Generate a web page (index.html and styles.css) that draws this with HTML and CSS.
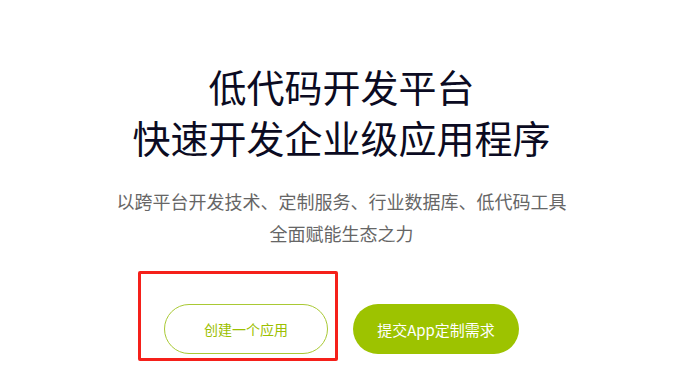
FILE: index.html
```html
<!DOCTYPE html>
<html lang="zh-CN">
<head>
<meta charset="utf-8">
<title>低代码开发平台</title>
<link rel="stylesheet" href="styles.css">
</head>
<body>
<section class="hero">
  <h1 class="hero-title">低代码开发平台<br>快速开发企业级应用程序</h1>
  <p class="hero-sub">以跨平台开发技术、定制服务、行业数据库、低代码工具<br>全面赋能生态之力</p>
  <div class="hero-actions">
    <div class="mark">
      <a class="btn btn-outline" href="#">创建一个应用</a>
    </div>
    <a class="btn btn-solid" href="#">提交App定制需求</a>
  </div>
</section>
</body>
</html>
```

FILE: styles.css
```css
html, body {
  margin: 0;
  padding: 0;
  background: #ffffff;
}

body {
  font-family: "Microsoft YaHei", "Noto Sans CJK SC", "Liberation Sans", sans-serif;
}

.hero {
  display: flex;
  flex-direction: column;
  align-items: center;
  padding: 60px 0 24px;
  text-align: center;
}

.hero-title {
  margin: 0;
  font-size: 38px;
  line-height: 51px;
  font-weight: 400;
  color: #0b0b22;
}

.hero-sub {
  margin: 23px 0 0;
  font-size: 18px;
  line-height: 32px;
  color: #666666;
}

.hero-actions {
  display: flex;
  gap: 25px;
  margin-top: 55px;
}

.mark {
  position: relative;
}

.mark::after {
  content: "";
  position: absolute;
  left: -26px;
  top: -33px;
  right: -10px;
  bottom: -7px;
  border: 3px solid #f5201a;
  border-radius: 2px;
  pointer-events: none;
}

.btn {
  display: flex;
  align-items: center;
  justify-content: center;
  box-sizing: border-box;
  height: 50px;
  border-radius: 25px;
  text-decoration: none;
}

.btn-outline {
  width: 164px;
  border: 1px solid #a9c934;
  color: #9cc000;
  font-size: 14px;
}

.btn-solid {
  width: 166px;
  background: #9dc300;
  color: #ffffff;
  font-size: 15px;
}
```
